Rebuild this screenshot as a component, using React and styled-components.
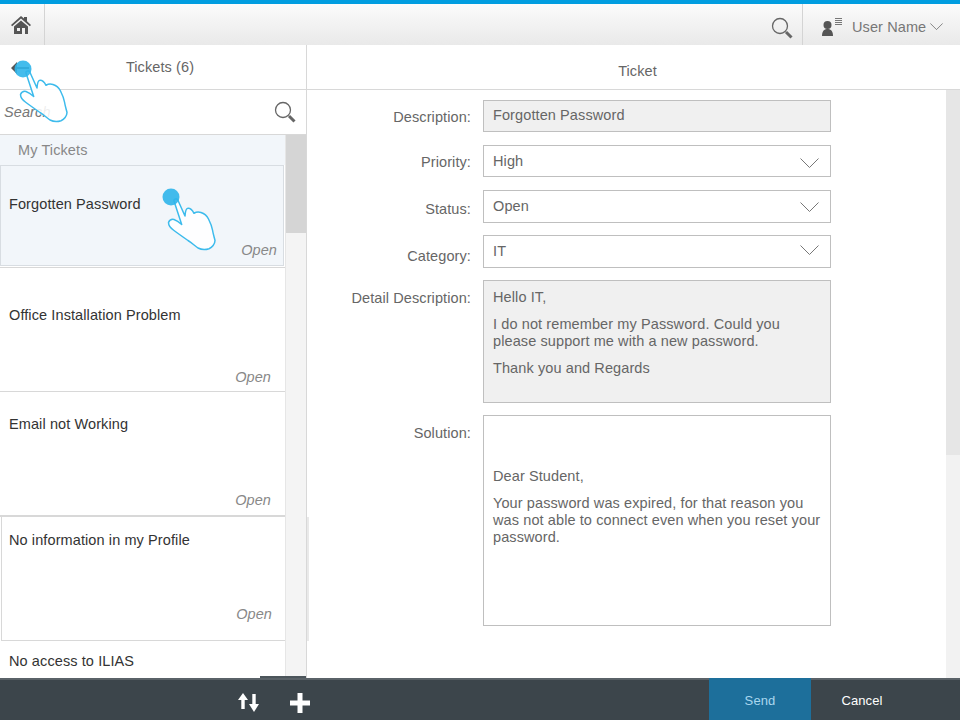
import { Fragment } from "react";
import styled, { createGlobalStyle } from "styled-components";

const Global = createGlobalStyle`
  html, body {
    margin: 0;
    padding: 0;
    background: #fff;
  }
  * {
    box-sizing: border-box;
  }
`;

const Page = styled.div`
  position: relative;
  width: 960px;
  height: 720px;
  display: flex;
  flex-direction: column;
  overflow: hidden;
  font-family: "Liberation Sans", Arial, sans-serif;
  font-size: 14.5px;
  letter-spacing: 0.1px;
  color: #666;
`;

const TopBar = styled.header`
  height: 45px;
  flex: none;
  display: flex;
  align-items: stretch;
  border-top: 4px solid #009de0;
  background: linear-gradient(#fbfbfb, #e9e9e9);
`;

const HomeCell = styled.div`
  width: 45px;
  display: flex;
  align-items: center;
  justify-content: center;
  border-right: 1px solid #d4d4d4;
  padding: 2px 3px 0 0;
`;

const TopSpacer = styled.div`
  flex: 1;
`;

const TopSearch = styled.div`
  width: 44px;
  display: flex;
  align-items: center;
  padding: 7px 0 0 12px;
  border-right: 1px solid #d4d4d4;
`;

const UserCell = styled.div`
  width: 157px;
  display: flex;
  align-items: center;
  padding: 5px 0 0 19px;
  color: #777;
`;

const UserName = styled.span`
  margin-left: 10px;
  margin-right: 4px;
`;

const Main = styled.div`
  flex: 1;
  min-height: 0;
  display: flex;
`;

const LeftPanel = styled.section`
  width: 307px;
  flex: none;
  display: flex;
  flex-direction: column;
  border-right: 1px solid #d8d8d8;
`;

const PanelTitle = styled.div`
  height: 45px;
  flex: none;
  display: flex;
  align-items: center;
  justify-content: center;
  border-bottom: 1px solid #d8d8d8;
  padding: ${(p) => p.$pad};
  color: #666;
`;

const BackArrow = styled.svg`
  position: absolute;
  left: 10px;
  top: 60px;
`;

const SearchRow = styled.div`
  height: 45px;
  flex: none;
  display: flex;
  align-items: center;
  justify-content: space-between;
  padding: 0 10px 0 4px;
  border-bottom: 1px solid #d8d8d8;
  font-style: italic;
  color: #777;
`;

const ListArea = styled.div`
  flex: 1;
  min-height: 0;
  display: flex;
  overflow: hidden;
`;

const TicketList = styled.div`
  width: 285px;
  flex: none;
  display: flex;
  flex-direction: column;
`;

const GroupTitle = styled.div`
  height: 30px;
  flex: none;
  display: flex;
  align-items: center;
  padding-left: 18px;
  background: #f2f6fa;
  color: #888;
`;

const Ticket = styled.div`
  height: ${(p) => p.$height}px;
  flex: none;
  display: flex;
  flex-direction: column;
  justify-content: space-between;
  padding: ${(p) => p.$top}px 14px 0 9px;
  color: #333;
  background: ${(p) => (p.$selected ? "#f2f6fa" : "#fff")};
  border-bottom: ${(p) => p.$rule || 1}px solid #d8d8d8;
  ${(p) => p.$topRule && "border-top: 1px solid #d8d8d8;"}
  ${(p) => p.$selected && "border: 1px solid #d8dde2; margin: 0 1px 1px 0; padding-left: 8px; padding-right: 6px;"}
  ${(p) => p.$boxed && "border-left: 1px solid #d8d8d8; margin-left: 1px; padding-left: 7px; padding-right: 13px;"}
`;

const TicketStatus = styled.span`
  align-self: flex-end;
  font-style: italic;
  color: #888;
  margin-bottom: ${(p) => p.$bottom}px;
`;

const ScrollTrack = styled.div`
  flex: 1;
  background: #f4f4f4;
  border-left: 1px solid #e6e6e6;
`;

const ScrollThumb = styled.div`
  height: ${(p) => p.$height}px;
  background: ${(p) => p.$color};
`;

const ScrollTab = styled.div`
  position: absolute;
  left: 260px;
  top: 676px;
  width: 46px;
  height: 2px;
  background: #4c555b;
`;

const PanelEdge = styled.div`
  position: absolute;
  left: 307px;
  top: 517px;
  width: 2px;
  height: 124px;
  background: #e9e9e9;
`;

const RightPanel = styled.section`
  flex: 1;
  min-width: 0;
  display: flex;
  flex-direction: column;
`;

const RightBody = styled.div`
  flex: 1;
  min-height: 0;
  display: flex;
`;

const Form = styled.form`
  flex: 1;
  display: grid;
  grid-template-columns: 164px 348px;
  grid-template-rows: 45px 45px 45px 45px 135px auto;
  column-gap: 12px;
  padding: 10px 0 0 0;
  align-content: start;
`;

const Label = styled.label`
  text-align: right;
  padding-top: ${(p) => p.$top || 9}px;
  color: #666;
`;

const Field = styled.div`
  height: ${(p) => p.$height}px;
  border: 1px solid #bfbfbf;
  background: ${(p) => (p.$filled ? "#f0f0f0" : "#fff")};
  padding: ${(p) => p.$top || 6}px ${(p) => (p.$select ? 11 : 9)}px 0 9px;
  display: ${(p) => (p.$select ? "flex" : "block")};
  justify-content: space-between;
  color: #666;
  line-height: 17px;
`;

const Para = styled.p`
  margin: 0 0 10px;
  line-height: 17px;
`;

const RightScroll = styled.div`
  width: 14px;
  flex: none;
  background: #f2f2f2;
`;

const Footer = styled.footer`
  height: 42px;
  flex: none;
  display: flex;
  align-items: stretch;
  background: #3c454b;
  border-top: 2px solid #5a6268;
`;

const FooterIcons = styled.div`
  width: 709px;
  display: flex;
  align-items: center;
  padding: 5px 0 0 238px;
  gap: 31px;
`;

const FooterButton = styled.div`
  width: ${(p) => p.$width}px;
  margin-top: -2px;
  padding-top: 2px;
  display: flex;
  align-items: center;
  justify-content: center;
  font-size: 13px;
  background: ${(p) => p.$bg || "transparent"};
  color: ${(p) => p.$color};
`;

const Touch = styled.svg`
  position: absolute;
  left: ${(p) => p.$x}px;
  top: ${(p) => p.$y}px;
  overflow: visible;
`;

const ChevronMark = styled.svg`
  margin-top: ${(p) => p.$top}px;
  flex: none;
`;

const Magnifier = ({ size = 22 }) => (
  <svg width={size} height={size} viewBox="0 0 22 22">
    <circle cx="9" cy="9" r="7.5" fill="none" stroke="#666" strokeWidth="1.300" />
    <path d="M15 15l5.500 5.500" stroke="#666" strokeWidth="3" />
  </svg>
);

const Chevron = ({ width = 19, height = 10, color = "#777", top = 5 }) => (
  <ChevronMark $top={top} width={width} height={height} viewBox="0 0 19 10">
    <path d="M.5.5L9.500 9.500 18.500.5" fill="none" stroke={color} strokeWidth="1" />
  </ChevronMark>
);

const TouchHand = ({ x, y }) => (
  <Touch $x={x} $y={y} width="80" height="80" viewBox="0 0 80 80">
    <path
      d="M18.500 42.500C19.500 40 21.500 39 24 39.500C27 40.500 29.500 42.500 31.700 44.500L24 21C23.500 19 27 18 27.800 20L35 36C35.300 32 36 28.500 37.800 28.300C40 28 42.500 30.500 44 33.300C46 32 49 31.800 51 32.500C54 33.500 57 36 58.500 39C60.500 43 62 47 62.500 50C63.300 55 64.500 58 65 60.500C65 64 62 67.500 59 68.700C55 70 51 69.500 48 68C44.500 65.500 42 63 38 60.500C33 57 26 52 24 50.500C21 48.500 18.500 45.500 18.500 42.500Z"
      fill="#fff"
      fillOpacity="0.88"
      stroke="#3dbbec"
      strokeWidth="1.500"
      strokeLinejoin="round"
    />
    <circle cx="21" cy="17" r="8.500" fill="#2fb5ea" fillOpacity="0.9" />
  </Touch>
);

const selectFields = [
  ["Priority:", "High", 32, 9, 5],
  ["Status:", "Open", 33, 11, 4],
  ["Category:", "IT", 33, 13, 2],
];

const App = () => {
  return (
    <Page>
      <Global />
      <TopBar>
        <HomeCell>
          <svg width="20" height="19" viewBox="0 0 20 19">
            <path d="M10 0l3 2.600V1h3v4.200L20 9l-1.200 1.200L10 2.600 1.200 10.200 0 9z" fill="#555" />
            <path d="M3 10.500L10 4.500l7 6V18H3zM6 12v3h3v-3zM11 12v6h3v-6z" fill="#555" fillRule="evenodd" />
          </svg>
        </HomeCell>
        <TopSpacer />
        <TopSearch>
          <Magnifier />
        </TopSearch>
        <UserCell>
          <svg width="20" height="20" viewBox="0 0 20 20">
            <circle cx="5.500" cy="8" r="4" fill="#555" />
            <path d="M0 19c0-6 3-7 5.500-7s5.500 1 5.500 7z" fill="#555" />
            <path d="M13 1.500h7M13 3.500h7M13 5.500h7M13 7.500h7" stroke="#777" strokeWidth="1" />
          </svg>
          <UserName>User Name</UserName>
          <Chevron width={13} height={7} color="#555" top={-2} />
        </UserCell>
      </TopBar>
      <Main>
        <LeftPanel>
          <PanelTitle $pad="0 0 0 14px">Tickets (6)</PanelTitle>
          <SearchRow>
            <span>Search</span>
            <Magnifier />
          </SearchRow>
          <ListArea>
            <TicketList>
              <GroupTitle>My Tickets</GroupTitle>
              <Ticket $selected $height={101} $top={30}>
                <span>Forgotten Password</span>
                <TicketStatus $bottom={7}>Open</TicketStatus>
              </Ticket>
              <Ticket $topRule $height={125} $top={39}>
                <span>Office Installation Problem</span>
                <TicketStatus $bottom={6}>Open</TicketStatus>
              </Ticket>
              <Ticket $height={125} $top={24} $rule={2}>
                <span>Email not Working</span>
                <TicketStatus $bottom={7}>Open</TicketStatus>
              </Ticket>
              <Ticket $boxed $height={124} $top={15}>
                <span>No information in my Profile</span>
                <TicketStatus $bottom={18}>Open</TicketStatus>
              </Ticket>
              <Ticket $height={40} $top={12}>
                <span>No access to ILIAS</span>
              </Ticket>
            </TicketList>
            <ScrollTrack>
              <ScrollThumb $height={98} $color="#d5d5d5" />
            </ScrollTrack>
          </ListArea>
        </LeftPanel>
        <RightPanel>
          <PanelTitle $pad="7px 0 0 8px">Ticket</PanelTitle>
          <RightBody>
            <Form>
              <Label>Description:</Label>
              <Field $filled $height={32}>
                Forgotten Password
              </Field>
              {selectFields.map(([label, value, height, labelTop, chevronTop]) => (
                <Fragment key={label}>
                  <Label $top={labelTop}>{label}</Label>
                  <Field $select $height={height} $top={7}>
                    {value}
                    <Chevron top={chevronTop} />
                  </Field>
                </Fragment>
              ))}
              <Label $top={10}>Detail Description:</Label>
              <Field $filled $height={123} $top={8}>
                <Para>Hello IT,</Para>
                <Para>I do not remember my Password. Could you please support me with a new password.</Para>
                <Para>Thank you and Regards</Para>
              </Field>
              <Label $top={10}>Solution:</Label>
              <Field $height={211} $top={52}>
                <Para>Dear Student,</Para>
                <Para>
                  Your password was expired, for that reason you was not able to connect even when you reset
                  your password.
                </Para>
              </Field>
            </Form>
            <RightScroll>
              <ScrollThumb $height={365} $color="#e6e6e6" />
            </RightScroll>
          </RightBody>
        </RightPanel>
      </Main>
      <Footer>
        <FooterIcons>
          <svg width="21" height="19" viewBox="0 0 21 19">
            <path d="M5 0l5 7H6.700v9H3.300V7H0zM16 19l-5-8h3.300V1h3.400v10H21z" fill="#fff" />
          </svg>
          <svg width="20" height="20" viewBox="0 0 20 20">
            <path d="M7.500 0h5v7.500H20v5h-7.500V20h-5v-7.500H0v-5h7.500z" fill="#fff" />
          </svg>
        </FooterIcons>
        <FooterButton $width={102} $bg="#1d6f9b" $color="#a9d6ee">
          Send
        </FooterButton>
        <FooterButton $width={102} $color="#fff">
          Cancel
        </FooterButton>
      </Footer>
      <ScrollTab />
      <PanelEdge />
      <BackArrow width="24" height="16" viewBox="0 0 24 16">
        <path d="M1 8l6-6v5h12v2H7v5z" fill="#555" />
      </BackArrow>
      <TouchHand x={2} y={52} />
      <TouchHand x={150} y={180} />
    </Page>
  );
};

export default App;
